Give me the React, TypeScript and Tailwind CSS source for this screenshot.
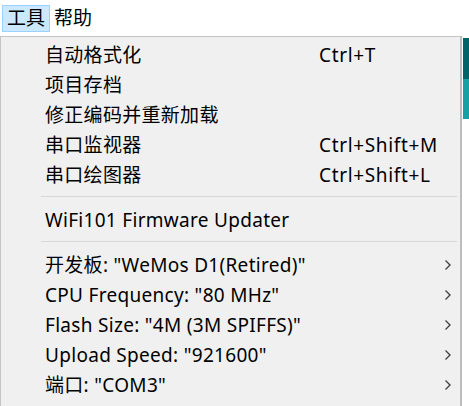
import React from "react";

type Item =
  | { kind: "item"; label: string; shortcut?: string; submenu?: boolean }
  | { kind: "sep" };

const items: Item[] = [
  { kind: "item", label: "自动格式化", shortcut: "Ctrl+T" },
  { kind: "item", label: "项目存档" },
  { kind: "item", label: "修正编码并重新加载" },
  { kind: "item", label: "串口监视器", shortcut: "Ctrl+Shift+M" },
  { kind: "item", label: "串口绘图器", shortcut: "Ctrl+Shift+L" },
  { kind: "sep" },
  { kind: "item", label: "WiFi101 Firmware Updater" },
  { kind: "sep" },
  { kind: "item", label: '开发板: "WeMos D1(Retired)"', submenu: true },
  { kind: "item", label: 'CPU Frequency: "80 MHz"', submenu: true },
  { kind: "item", label: 'Flash Size: "4M (3M SPIFFS)"', submenu: true },
  { kind: "item", label: 'Upload Speed: "921600"', submenu: true },
  { kind: "item", label: '端口: "COM3"', submenu: true },
];

function Chevron() {
  return (
    <svg width="8" height="12" viewBox="0 0 8 12" className="shrink-0">
      <path d="M1.5 1.5 L6 6 L1.5 10.5" fill="none" stroke="#444" strokeWidth="1.4" />
    </svg>
  );
}

export default function App() {
  return (
    <div
      className="relative w-[469px] h-[406px] overflow-hidden bg-white text-black text-[19px] leading-none"
      style={{ fontFamily: '"Noto Sans", "Noto Sans CJK SC", sans-serif' }}
    >
      {/* menu bar */}
      <div className="flex h-[36px] items-start pt-[5px] pl-[2px]">
        <div className="flex h-[27px] items-center px-[4px] bg-[#cce8ff] border border-[#99d1ff]">工具</div>
        <div className="flex h-[27px] items-center px-[4px]">帮助</div>
      </div>

      <div className="flex">
        {/* dropdown */}
        <div className="w-[462px] h-[370px] bg-[#f0f0f0] border-l border-t border-r-2 border-[#c4c4c4] border-r-[#bdbdbd] pt-[3px]">
          {items.map((it, i) =>
            it.kind === "sep" ? (
              <div key={i} className="h-[15px] pt-[6px] ml-[40px] mr-[3px]">
                <div className="border-t border-[#d7d7d7]" />
              </div>
            ) : (
              <div key={i} className="flex h-[30px] items-center pl-[44px] pr-[8px]">
                <span className="w-[274px] shrink-0 whitespace-nowrap tracking-[0.3px]">{it.label}</span>
                <span className="whitespace-nowrap tracking-[0.65px]">{it.shortcut}</span>
                {it.submenu && (
                  <span className="ml-auto">
                    <Chevron />
                  </span>
                )}
              </div>
            )
          )}
        </div>

        {/* window behind */}
        <div className="flex-1 pt-[2px] pl-px flex flex-col">
          <div className="h-[41px] bg-[#006468]" />
          <div className="h-[40px] bg-[#17a1a5]" />
        </div>
      </div>
    </div>
  );
}
